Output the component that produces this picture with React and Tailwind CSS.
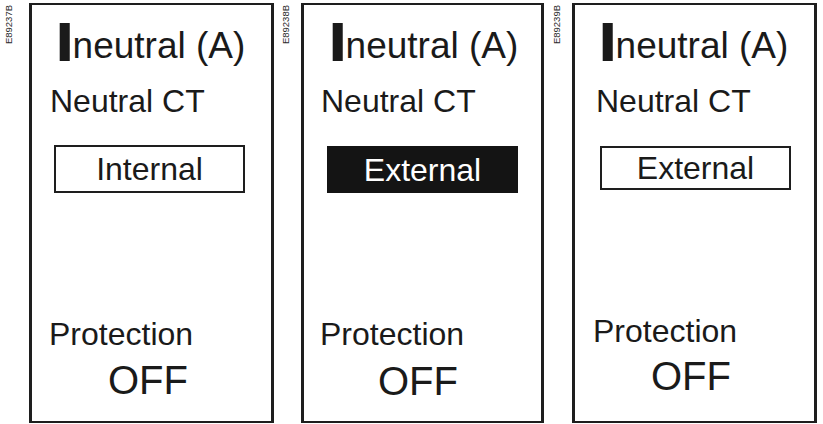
import React from "react";

const panels = [
  {
    code: "E89237B",
    col: "w-[29px] pl-[4px]",
    panel: "w-[245px]",
    iMl: "ml-[25px]",
    nctMl: "ml-[18px]",
    box: "ml-[22px] mt-[28px] h-[48px] border-2 border-[#1e1e1e] bg-white text-[#1a1a1a]",
    text: "Internal",
    protMl: "ml-[17px] mt-[125px]",
    offMl: "ml-[76px] mt-[10px]",
  },
  {
    code: "E89238B",
    col: "w-[27px] pl-[7px]",
    panel: "w-[243px]",
    iMl: "ml-[26px]",
    nctMl: "ml-[17px]",
    box: "ml-[23px] mt-[29px] h-[47px] bg-[#141414] text-white",
    text: "External",
    protMl: "ml-[16px] mt-[125px]",
    offMl: "ml-[74px] mt-[11px]",
  },
  {
    code: "E89239B",
    col: "w-[28px] pl-[8px]",
    panel: "w-[245px]",
    iMl: "ml-[25px]",
    nctMl: "ml-[21px]",
    box: "ml-[25px] mt-[29px] h-[44px] border-2 border-[#1e1e1e] bg-white text-[#1a1a1a]",
    text: "External",
    protMl: "ml-[18px] mt-[125px]",
    offMl: "ml-[76px] mt-[9px]",
  },
];

function Panel({ p }) {
  return (
    <>
      <div className={`${p.col} shrink-0`}>
        <div className="mt-[5px] text-[9.5px] leading-none text-[#2a2a2a] [writing-mode:vertical-rl] rotate-180">
          {p.code}
        </div>
      </div>
      <div
        className={`${p.panel} mt-[3px] flex h-[420px] shrink-0 flex-col border-x-[3px] border-y-2 border-[#1e1e1e]`}
      >
        <div className="mt-[6px] flex items-baseline">
          <span
            className={`${p.iMl} inline-block translate-y-[3px] scale-x-[1.25] text-[56px] font-bold leading-none`}
          >
            I
          </span>
          <span className="text-[37px] leading-none">neutral (A)</span>
        </div>
        <div className={`${p.nctMl} mt-[18px] text-[32px] leading-none`}>Neutral CT</div>
        <div className={`${p.box} flex w-[191px] items-center justify-center`}>
          <span className="text-[32px] leading-none">{p.text}</span>
        </div>
        <div className={`${p.protMl} text-[32px] leading-none`}>Protection</div>
        <div className={`${p.offMl} text-[40px] leading-none`}>OFF</div>
      </div>
    </>
  );
}

export default function App() {
  return (
    <div className="flex h-[424px] w-[823px] overflow-hidden bg-white font-['Liberation_Sans',Arial,sans-serif] text-[#1a1a1a]">
      {panels.map((p) => (
        <Panel key={p.code} p={p} />
      ))}
    </div>
  );
}
